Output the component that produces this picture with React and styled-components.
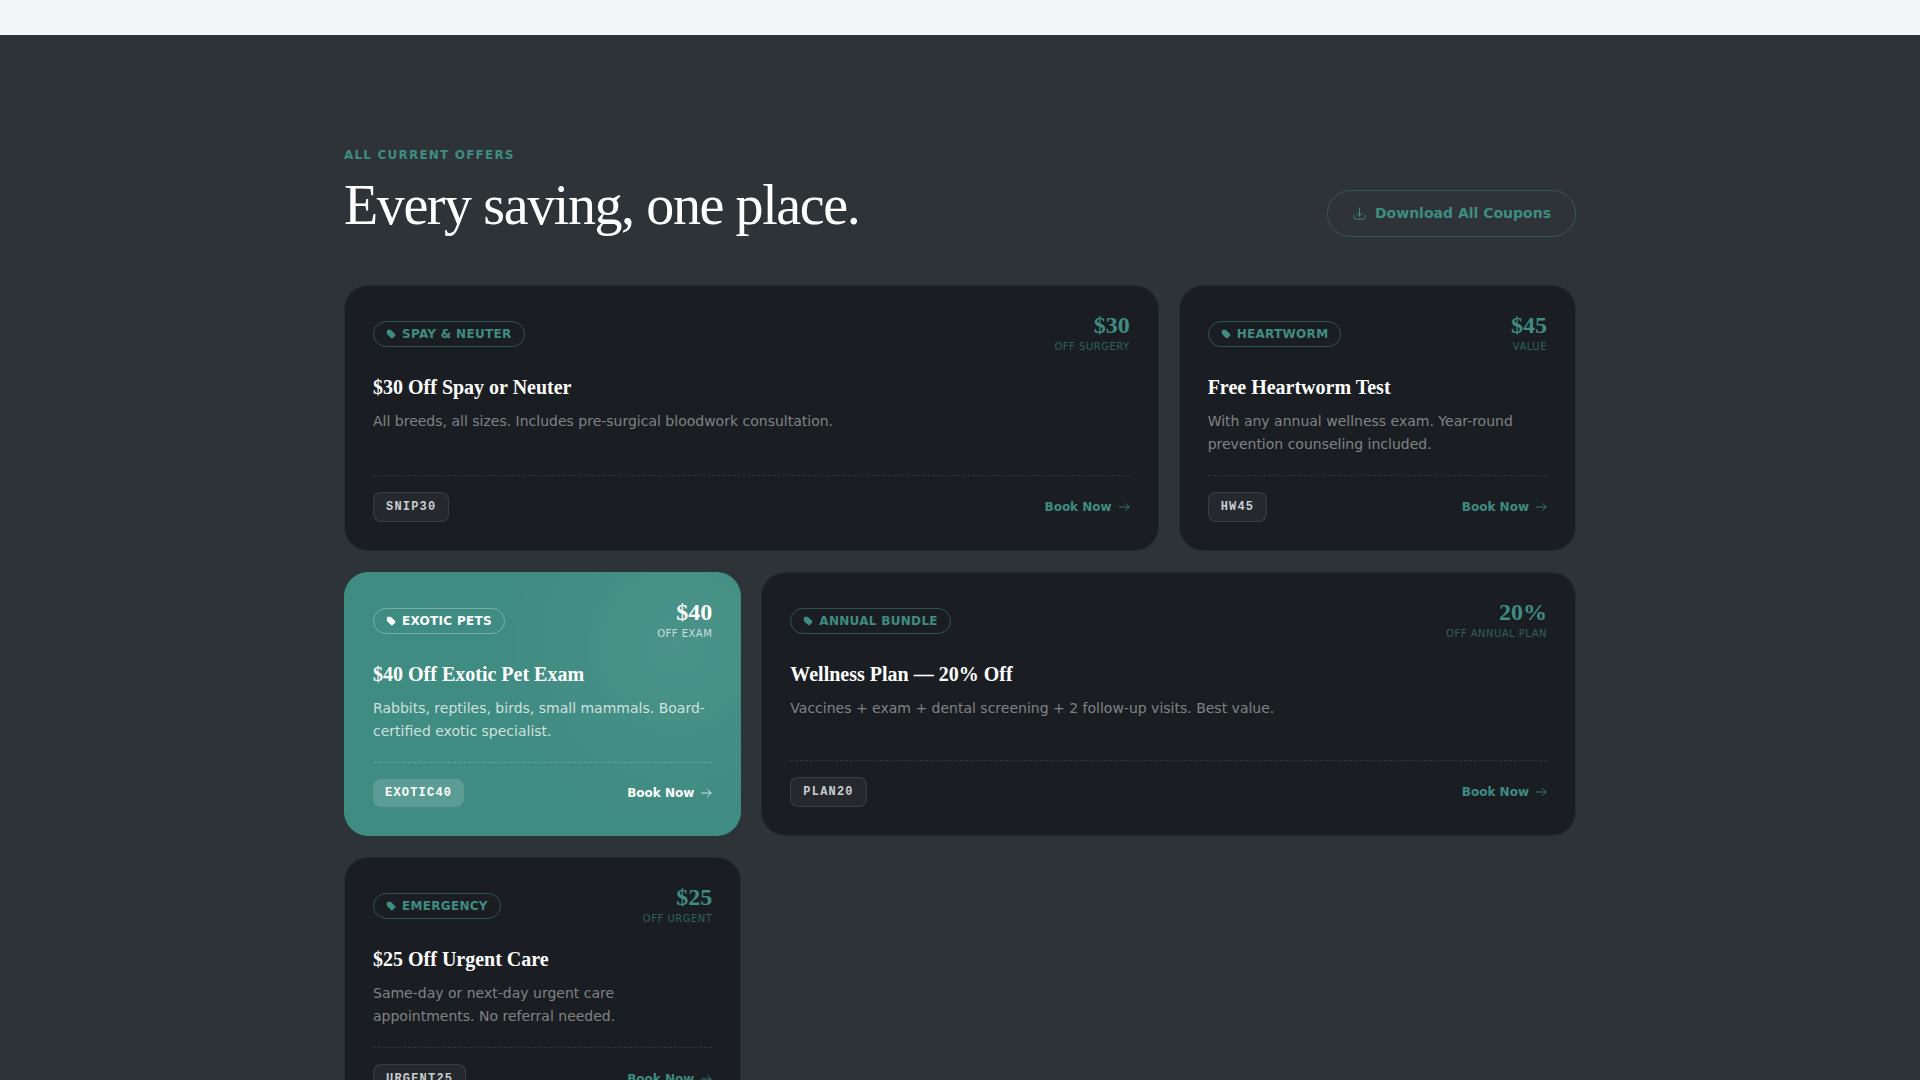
import React from "react";
import styled, { createGlobalStyle, css } from "styled-components";

const teal = "#3f8c82";
const serif = `"Liberation Serif", serif`;

const GlobalStyle = createGlobalStyle`
  * {
    box-sizing: border-box;
  }

  body {
    margin: 0;
    background-color: #2e3337;
    font-family: "DejaVu Sans", sans-serif;
  }

  h2, h3, p {
    margin: 0;
  }
`;

const PreviousSection = styled.div`
  height: 35px;
  background-color: #f3f5f7;
`;

const Section = styled.section`
  padding: 111px 24px;
  background-color: #2e3337;
`;

const Container = styled.div`
  max-width: 1232px;
  margin: 0 auto;
`;

const Header = styled.header`
  display: flex;
  flex-wrap: wrap;
  align-items: flex-end;
  justify-content: space-between;
  gap: 24px;
  margin-bottom: 48px;
`;

const Eyebrow = styled.p`
  margin-bottom: 8px;
  color: ${teal};
  font-size: 12px;
  font-weight: bold;
  line-height: 19px;
  letter-spacing: 0.1em;
  text-transform: uppercase;
`;

const Heading = styled.h2`
  color: #fff;
  font-family: ${serif};
  font-size: 56px;
  font-weight: normal;
  line-height: 64px;
  letter-spacing: -0.025em;
`;

const DownloadButton = styled.button`
  display: inline-flex;
  align-items: center;
  gap: 8px;
  padding: 12px 24px;
  border: 1px solid rgba(63, 140, 130, 0.4);
  border-radius: 24px;
  background: none;
  color: ${teal};
  font-family: inherit;
  font-size: 14px;
  font-weight: bold;
  line-height: 21px;
  cursor: pointer;
`;

const Grid = styled.div`
  display: grid;
  grid-template-columns: repeat(3, 1fr);
  gap: 21px 20px;
`;

const Card = styled.article`
  display: flex;
  flex-direction: column;
  grid-column: span ${({ $wide }) => ($wide ? 2 : 1)};
  padding: 28px;
  border: 1px solid rgba(255, 255, 255, 0.06);
  border-radius: 24px;
  background-color: #1a1e22;

  ${({ $featured }) =>
    $featured &&
    css`
      border-color: ${teal};
      background: radial-gradient(
          circle at 84% 28%,
          rgba(255, 255, 255, 0.06),
          transparent 180px
        )
        ${teal};
    `}
`;

const CardTop = styled.div`
  display: flex;
  align-items: center;
  justify-content: space-between;
  margin-bottom: 20px;
`;

const Badge = styled.span`
  display: inline-flex;
  align-items: center;
  gap: 6px;
  padding: 3px 12px;
  border: 1px solid
    ${({ $featured }) =>
      $featured ? "rgba(255, 255, 255, 0.3)" : "rgba(63, 140, 130, 0.5)"};
  border-radius: 13px;
  color: ${({ $featured }) => ($featured ? "#fff" : teal)};
  font-size: 12px;
  font-weight: bold;
  line-height: 18px;
  letter-spacing: 0.025em;
  text-transform: uppercase;
`;

const Value = styled.div`
  color: ${({ $featured }) => ($featured ? "#fff" : teal)};
  text-align: right;
`;

const Amount = styled.div`
  margin-bottom: 4px;
  font-family: ${serif};
  font-size: 24px;
  font-weight: bold;
  line-height: 22px;
`;

const AmountNote = styled.div`
  font-size: 10px;
  line-height: 14px;
  letter-spacing: 0.05em;
  text-transform: uppercase;
  opacity: ${({ $featured }) => ($featured ? 0.7 : 0.6)};
`;

const Title = styled.h3`
  margin-bottom: 10px;
  color: #fff;
  font-family: ${serif};
  font-size: 20px;
  line-height: 26px;
`;

const Description = styled.p`
  margin-bottom: 19px;
  color: ${({ $featured }) =>
    $featured ? "rgba(255, 255, 255, 0.75)" : "rgba(255, 255, 255, 0.45)"};
  font-size: 14px;
  line-height: 23px;
`;

const CardBottom = styled.div`
  display: flex;
  align-items: center;
  justify-content: space-between;
  margin-top: auto;
  padding-top: 16px;
  border-top: 1px dashed
    ${({ $featured }) =>
      $featured ? "rgba(255, 255, 255, 0.2)" : "rgba(255, 255, 255, 0.1)"};
`;

const Code = styled.code`
  padding: 5px 12px;
  border: 1px solid rgba(255, 255, 255, 0.1);
  border-radius: 8px;
  background-color: rgba(255, 255, 255, 0.05);
  color: #c8cdd1;
  font-family: "Liberation Mono", monospace;
  font-size: 12px;
  font-weight: bold;
  line-height: 18px;
  letter-spacing: 0.1em;

  ${({ $featured }) =>
    $featured &&
    css`
      border: none;
      background-color: rgba(255, 255, 255, 0.15);
      color: #fff;
    `}
`;

const BookLink = styled.a`
  display: inline-flex;
  align-items: center;
  gap: 6px;
  color: ${({ $featured }) => ($featured ? "#fff" : teal)};
  font-size: 12px;
  font-weight: bold;
  line-height: 18px;
  text-decoration: none;
`;

const LineIcon = styled.svg`
  fill: none;
  stroke: currentColor;
  stroke-linecap: round;
  stroke-linejoin: round;
`;

const DownloadIcon = () => (
  <LineIcon width="15" height="15" viewBox="0 0 24 24" strokeWidth="1.5">
    <path d="M3 15c0 2.828 0 4.243.879 5.121C4.757 21 6.172 21 9 21h6c2.828 0 4.243 0 5.121-.879C21 19.243 21 17.828 21 15" />
    <path d="M12 3v13m0 0 4-4.375M12 16l-4-4.375" />
  </LineIcon>
);

const ArrowIcon = () => (
  <LineIcon width="12" height="12" viewBox="0 0 12 12" strokeWidth="0.75">
    <path d="M1.500 6h9.500M7.500 2.500 11 6 7.500 9.500" />
  </LineIcon>
);

const TagIcon = () => (
  <svg width="10" height="10" viewBox="0 0 24 24" fill="currentColor">
    <path d="M2 5a3 3 0 0 1 3-3h5.500a3 3 0 0 1 2.100.9l9.200 9.200a3 3 0 0 1 0 4.200l-5.500 5.500a3 3 0 0 1-4.200 0l-9.200-9.200A3 3 0 0 1 2 10.500z" />
  </svg>
);

const offers = [
  {
    tag: "Spay & Neuter",
    amount: "$30",
    note: "Off surgery",
    title: "$30 Off Spay or Neuter",
    text: "All breeds, all sizes. Includes pre-surgical bloodwork consultation.",
    code: "SNIP30",
    wide: true,
  },
  {
    tag: "Heartworm",
    amount: "$45",
    note: "Value",
    title: "Free Heartworm Test",
    text: "With any annual wellness exam. Year-round prevention counseling included.",
    code: "HW45",
  },
  {
    tag: "Exotic Pets",
    amount: "$40",
    note: "Off exam",
    title: "$40 Off Exotic Pet Exam",
    text: "Rabbits, reptiles, birds, small mammals. Board-certified exotic specialist.",
    code: "EXOTIC40",
    featured: true,
  },
  {
    tag: "Annual Bundle",
    amount: "20%",
    note: "Off annual plan",
    title: "Wellness Plan — 20% Off",
    text: "Vaccines + exam + dental screening + 2 follow-up visits. Best value.",
    code: "PLAN20",
    wide: true,
  },
  {
    tag: "Emergency",
    amount: "$25",
    note: "Off urgent",
    title: "$25 Off Urgent Care",
    text: "Same-day or next-day urgent care appointments. No referral needed.",
    code: "URGENT25",
  },
];

const OfferCard = ({ offer }) => {
  const { tag, amount, note, title, text, code, wide, featured } = offer;

  return (
    <Card $wide={wide} $featured={featured}>
      <CardTop>
        <Badge $featured={featured}>
          <TagIcon />
          {tag}
        </Badge>
        <Value $featured={featured}>
          <Amount>{amount}</Amount>
          <AmountNote $featured={featured}>{note}</AmountNote>
        </Value>
      </CardTop>
      <Title>{title}</Title>
      <Description $featured={featured}>{text}</Description>
      <CardBottom $featured={featured}>
        <Code $featured={featured}>{code}</Code>
        <BookLink href="#book" $featured={featured}>
          Book Now
          <ArrowIcon />
        </BookLink>
      </CardBottom>
    </Card>
  );
};

const App = () => (
  <>
    <GlobalStyle />
    <PreviousSection />
    <Section>
      <Container>
        <Header>
          <div>
            <Eyebrow>All current offers</Eyebrow>
            <Heading>Every saving, one place.</Heading>
          </div>
          <DownloadButton type="button">
            <DownloadIcon />
            Download All Coupons
          </DownloadButton>
        </Header>
        <Grid>
          {offers.map((offer) => (
            <OfferCard key={offer.code} offer={offer} />
          ))}
        </Grid>
      </Container>
    </Section>
  </>
);

export default App;
